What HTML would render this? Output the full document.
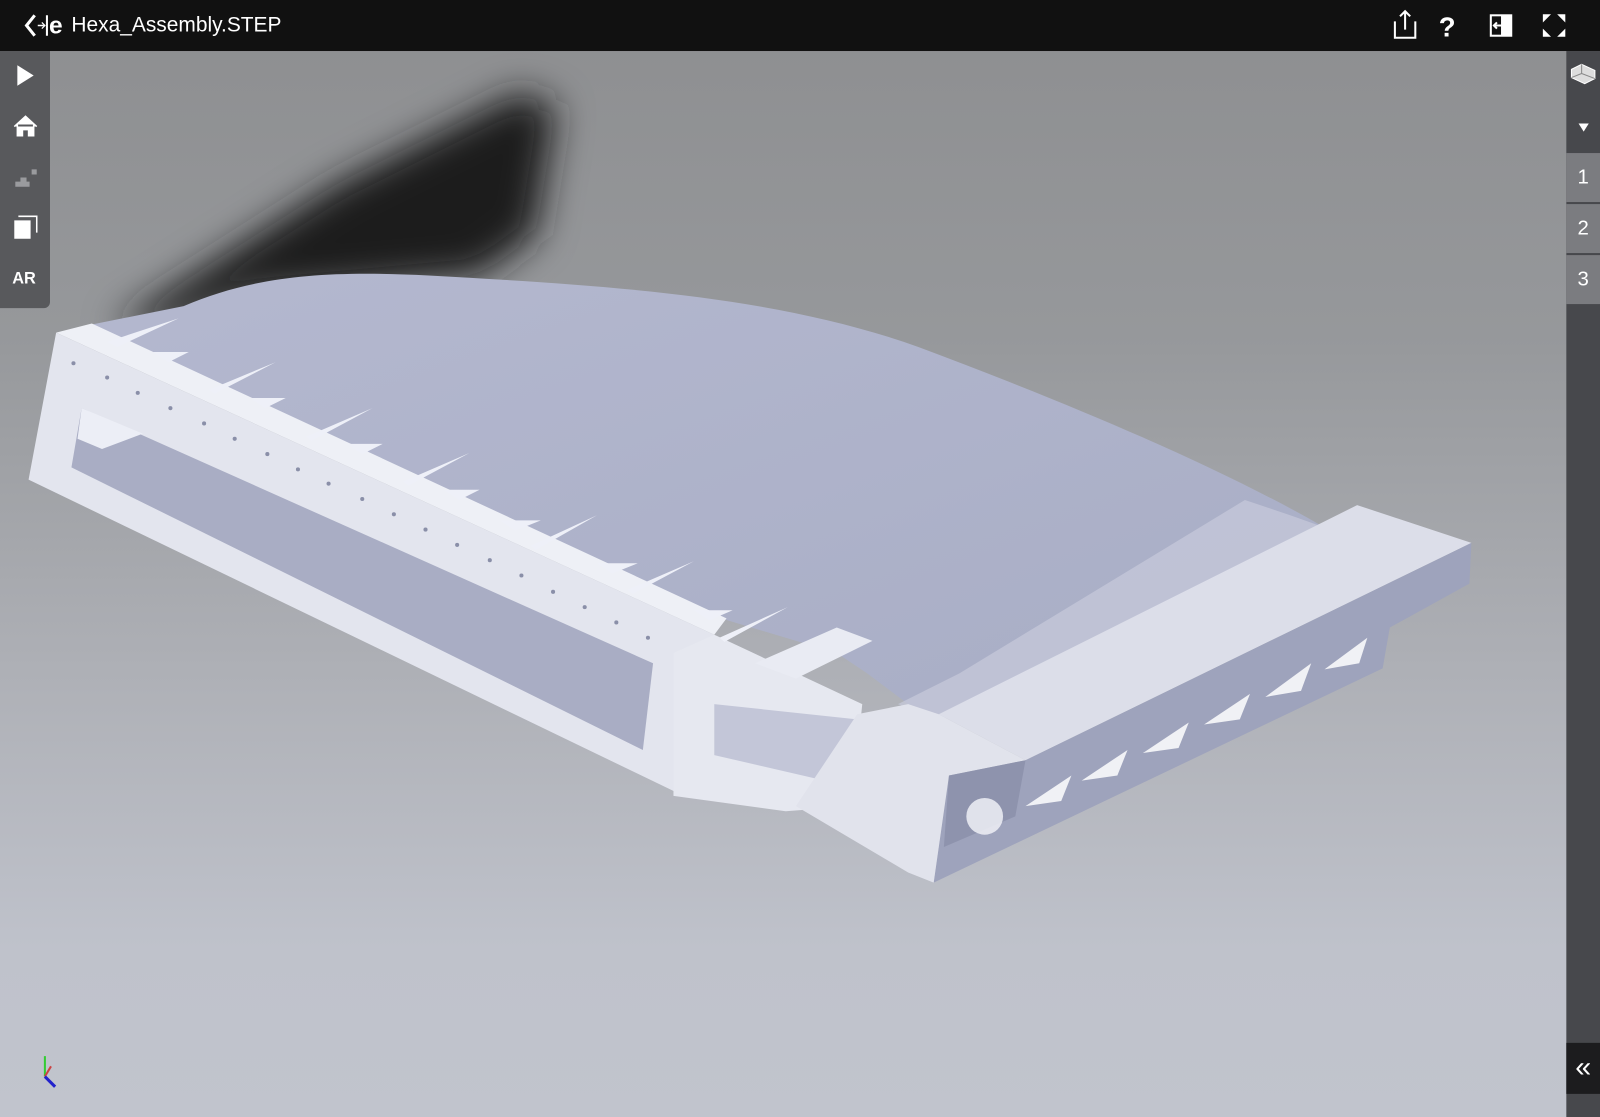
<!DOCTYPE html>
<html><head><meta charset="utf-8"><style>
html,body{margin:0;padding:0;width:1600px;height:1117px;overflow:hidden;background:#c0c3cc}
#w{position:absolute;left:0;top:0;width:1568px;height:1095px;transform:scale(1.020408);transform-origin:0 0;font-family:"Liberation Sans",sans-serif;
background:linear-gradient(180deg,#8d8e90 0%,#96989b 30%,#aeb0b6 60%,#bfc2cb 85%,#c1c4cd 100%)}
#top{position:absolute;left:0;top:0;width:1568px;height:50px;background:#111}
#title{position:absolute;left:70px;top:13px;color:#fff;font-size:20.5px}
#left{position:absolute;left:0;top:50px;width:49px;height:252px;background:#58595c;border-radius:0 0 6px 0}
#right{position:absolute;left:1535px;top:50px;width:33px;height:1045px;background:#47484c}
.num{position:absolute;left:1535px;width:33px;height:48px;background:#7b7c80;color:#fff;font-size:20px;text-align:center;line-height:48px}
#coll{position:absolute;left:1535px;top:1022px;width:33px;height:50px;background:#1c1c1e;color:#fff;font-size:28px;text-align:center;line-height:48px}
</style></head><body><div id="w">
<svg style="position:absolute;left:0;top:0" width="1568" height="1095" viewBox="0 0 1568 1095">
<defs><filter id="b" x="-50%" y="-50%" width="200%" height="200%"><feGaussianBlur stdDeviation="18"/></filter>
<linearGradient id="tg" x1="0" y1="0" x2="1" y2="1"><stop offset="0" stop-color="#b4b8cf"/><stop offset="1" stop-color="#a8adc5"/></linearGradient></defs>
<path d="M110 320 L330 180 L510 90 L545 105 L525 230 L470 270 L250 290 L160 320Z" fill="#1a1b1e" filter="url(#b)"/>
<path d="M90 318 L180 300 C250 270 320 265 420 270 C600 280 760 290 900 340 C1060 400 1200 460 1300 518 L1000 690 L920 700 L890 690 L850 660 L820 640 L710 607 Z" fill="url(#tg)"/>
<path d="M1220 490 C1250 500 1280 510 1300 518 L1000 690 L920 705 L880 690 L940 660Z" fill="#c8cbdb" opacity="0.7"/>
<path d="M55 326 L90 317 L712 606 L700 622Z" fill="#eef0f6"/>
<path d="M28 470 L55 326 L700 622 L670 780 Z" fill="#e3e5ee"/>
<path d="M70 458 L80 400 L640 650 L630 735 Z" fill="#a9adc4"/>
<path d="M80 400 L140 425 L100 440 L76 430Z" fill="#eceef6"/>
<path d="M660 640 L700 622 L845 690 L835 790 L770 795 L660 780Z" fill="#e6e8f0"/>
<path d="M700 690 L840 705 L830 770 L700 740Z" fill="#c3c6d8"/>
<path d="M740 650 L820 615 L855 628 L780 665Z" fill="#e9ebf3"/>
<path d="M920 700 L1330 495 L1442 532 L1005 745 Z" fill="#dcdee9"/>
<path d="M1005 745 L1442 532 L1440 572 L1362 615 L1355 655 L915 865 L930 760 Z" fill="#9ea3bc"/>
<path d="M890 690 L920 700 L1005 745 L930 760 L915 865 L890 855 L780 790 L840 700Z" fill="#e1e3ec"/>
<path d="M930 760 L1005 745 L995 800 L925 830Z" fill="#8e93ad"/>
<g fill="#ffffff" opacity="0.85">
<path d="M1005 790 L1050 760 L1040 785Z"/><path d="M1060 765 L1105 735 L1095 760Z"/><path d="M1120 738 L1165 708 L1155 733Z"/><path d="M1180 710 L1225 680 L1215 705Z"/><path d="M1240 683 L1285 650 L1275 677Z"/><path d="M1298 656 L1340 625 L1332 650Z"/>
<circle cx="965" cy="800" r="18" fill="#eef0f6"/>
</g>
<g fill="#eef0f8"><path d="M105 335 L175 312 L115 340Z"/><path d="M205 382 L270 355 L210 386Z"/><path d="M300 428 L365 400 L305 432Z"/><path d="M395 472 L460 444 L400 476Z"/><path d="M520 535 L585 505 L525 539Z"/><path d="M615 578 L680 550 L620 582Z"/><path d="M705 625 L772 595 L710 629Z"/>
<path d="M150 345 L185 345 L165 355Z"/><path d="M245 390 L280 390 L260 400Z"/><path d="M340 435 L375 435 L355 445Z"/><path d="M435 480 L470 480 L450 490Z"/><path d="M490 510 L530 510 L505 520Z"/><path d="M585 552 L625 552 L600 562Z"/><path d="M680 598 L718 598 L695 608Z"/></g>
<g fill="#8a8fa8"><circle cx="72" cy="356" r="2"/><circle cx="105" cy="370" r="2"/><circle cx="135" cy="385" r="2"/><circle cx="167" cy="400" r="2"/><circle cx="200" cy="415" r="2"/><circle cx="230" cy="430" r="2"/><circle cx="262" cy="445" r="2"/><circle cx="292" cy="460" r="2"/><circle cx="322" cy="474" r="2"/><circle cx="355" cy="489" r="2"/><circle cx="386" cy="504" r="2"/><circle cx="417" cy="519" r="2"/><circle cx="448" cy="534" r="2"/><circle cx="480" cy="549" r="2"/><circle cx="511" cy="564" r="2"/><circle cx="542" cy="580" r="2"/><circle cx="573" cy="595" r="2"/><circle cx="604" cy="610" r="2"/><circle cx="635" cy="625" r="2"/></g>
<g transform="translate(44,1055)"><line x1="0" y1="0" x2="0" y2="-20" stroke="#3c3" stroke-width="2"/><line x1="0" y1="0" x2="6" y2="-10" stroke="#c44" stroke-width="2"/><line x1="0" y1="0" x2="10" y2="10" stroke="#22c" stroke-width="3"/></g>
</svg>
<div id="top"><svg style="position:absolute;left:22px;top:12px" width="46" height="26"><path d="M12 3 L4 13 L12 23" stroke="#fff" stroke-width="3" fill="none"/><path d="M15 13 L21 13" stroke="#fff" stroke-width="1.5"/><path d="M19 10 L22 13 L19 16" stroke="#fff" stroke-width="1.2" fill="none"/><path d="M24 3 L24 23" stroke="#fff" stroke-width="2"/><text x="26" y="21" fill="#fff" font-size="24" font-weight="bold" font-family="Liberation Sans">e</text></svg>
<div id="title">Hexa_Assembly.STEP</div>
<svg style="position:absolute;left:1364px;top:9px" width="180" height="32"><path d="M3 12 L3 28 L23 28 L23 12" stroke="#fff" stroke-width="2" fill="none"/><path d="M13 20 L13 2 M8 7 L13 2 L18 7" stroke="#fff" stroke-width="2" fill="none"/><text x="46" y="27" fill="#fff" font-size="27" font-weight="bold" font-family="Liberation Sans">?</text><rect x="96" y="5" width="22" height="22" fill="#fff"/><rect x="98" y="7" width="9" height="18" fill="#111"/><path d="M100 16 L110 16 M103 13 L100 16 L103 19" stroke="#fff" stroke-width="2" fill="none"/><path d="M148 5 L156 5 L148 13Z M170 5 L162 5 L170 13Z M148 27 L156 27 L148 19Z M170 27 L162 27 L170 19Z" fill="#fff"/></svg></div>
<div id="left"><svg width="49" height="252"><path d="M17 14 L33 24 L17 34Z" fill="#fff"/><path d="M14 74 L25 64 L36 74 M17 72 L17 83 L22 83 L22 77 L28 77 L28 83 L33 83 L33 72" fill="#fff" stroke="#fff" stroke-width="1.5"/><path d="M15 133 L29 133 L29 128 L15 128Z M20 128 L26 128 L26 124 L20 124Z M31 116 L36 116 L36 121 L31 121Z" fill="#9a9b9e"/><path d="M14 166 L30 166 L30 184 L14 184Z" fill="#fff"/><path d="M18 162 L36 162 L36 178" stroke="#fff" stroke-width="1.5" fill="none"/><text x="12" y="228" fill="#fff" font-size="16" font-weight="bold" font-family="Liberation Sans">AR</text></svg></div>
<div id="right"><svg width="33" height="100"><path d="M5 18 L15 13 L28 19 L28 27 L18 32 L5 26Z" fill="#ddd" stroke="#fff"/><path d="M15 13 L15 22 L28 27 M15 22 L5 26" stroke="#888" fill="none"/><path d="M12 71 L22 71 L17 79Z" fill="#fff"/></svg></div>
<div class="num" style="top:150px">1</div><div class="num" style="top:200px">2</div><div class="num" style="top:250px">3</div>
<div id="coll">«</div>
</div></body></html>
